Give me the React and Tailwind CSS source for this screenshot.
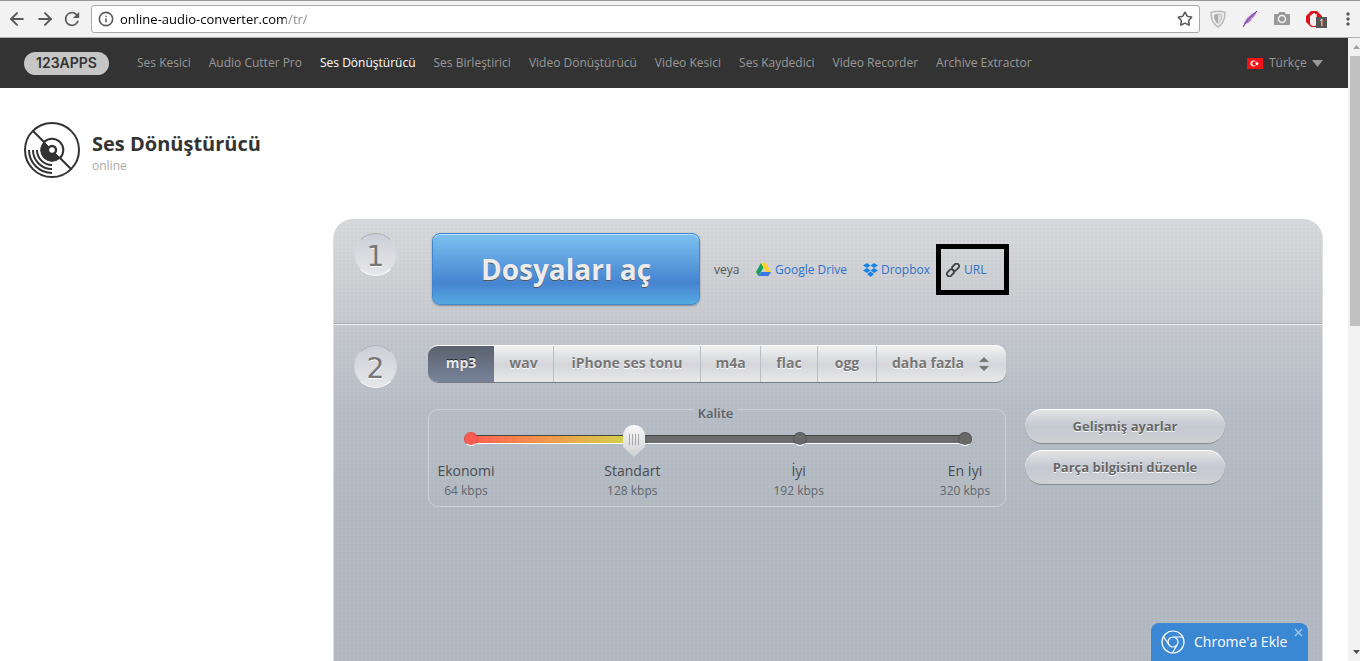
import React, { useState } from "react";
import { ArrowLeft, ArrowRight, Info, Star } from "lucide-react";

const navLinks = [
    "Ses Kesici",
    "Audio Cutter Pro",
    "Ses Dönüştürücü",
    "Ses Birleştirici",
    "Video Dönüştürücü",
    "Video Kesici",
    "Ses Kaydedici",
    "Video Recorder",
    "Archive Extractor",
];

const formats = [
    { name: "mp3", width: "w-[66px]" },
    { name: "wav", width: "w-[60px]" },
    { name: "iPhone ses tonu", width: "w-[147px]" },
    { name: "m4a", width: "w-[60px]" },
    { name: "flac", width: "w-[57px]" },
    { name: "ogg", width: "w-[59px]" },
];

const qualities = [
    { name: "Ekonomi", rate: "64 kbps" },
    { name: "Standart", rate: "128 kbps" },
    { name: "İyi", rate: "192 kbps" },
    { name: "En İyi", rate: "320 kbps" },
];

const BrowserBar = () => (
    <div className="flex h-[38px] shrink-0 items-center border-t border-b border-t-[#999] border-b-[#b0b0b0] bg-[#f2f2f2] pr-[10px] pl-[7px] text-[#5a5a5a]">
        <button aria-label="Back" className="w-7"><ArrowLeft size={20} strokeWidth={2.4} /></button>
        <button aria-label="Forward" className="w-7"><ArrowRight size={20} strokeWidth={2.4} /></button>
        <button aria-label="Reload" className="w-7">
            <svg width="18" height="18" viewBox="0 0 24 24" fill="currentColor">
                <path d="M17.65 6.35A7.96 7.96 0 0 0 12 4a8 8 0 1 0 7.73 10h-2.08A6 6 0 1 1 12 6c1.66 0 3.14.69 4.22 1.78L13 11h7V4z" transform="translate(-2.4 -2.4) scale(1.2)" />
            </svg>
        </button>
        <div className="flex h-7 flex-1 items-center rounded-[3px] border border-[#a9a9a9] bg-white px-[6px]">
            <Info size={16} strokeWidth={2.4} />
            <input
                aria-label="Address"
                defaultValue="online-audio-converter.com/tr/"
                className="ml-[6px] h-6 flex-1 bg-[linear-gradient(to_right,#000_166px,#888_166px)] bg-clip-text text-[13px] text-transparent outline-none"
            />
            <Star size={16} strokeWidth={2.4} />
        </div>
        <div className="flex items-center gap-4 pl-[10px]">
            <svg width="16" height="18" viewBox="0 0 16 18">
                <path d="M1 2.500Q8 0 15 2.500Q15 13 8 17Q1 13 1 2.500Z" fill="#eee" stroke="#bbb" strokeWidth="1.500" />
                <path d="M4 5Q6 4 8 4V14Q4 11 4 5Z" fill="#aaa" />
                <path d="M8 4Q10 4 12 5Q12 11 8 14" fill="#ddd" stroke="#bbb" />
            </svg>
            <svg width="16" height="18" viewBox="0 0 16 18">
                <path d="M1 17Q2 7 15 1Q14 5 11 8L9 9L10 10Q7 13 3 14Z" fill="#b184d2" />
                <path d="M1 17Q5 9 15 1" fill="none" stroke="#69309a" />
            </svg>
            <svg width="16" height="14" viewBox="0 0 16 14">
                <path d="M1 2h3l1.500-2h5L12 2h3q1 0 1 1v9q0 1-1 1H1q-1 0-1-1V3q0-1 1-1z" fill="#999" />
                <circle cx="8" cy="7" r="3.500" fill="none" stroke="#f2f2f2" strokeWidth="1.500" />
            </svg>
            <div className="relative">
                <svg width="16" height="16" viewBox="0 0 16 16">
                    <path d="M5 0h6l5 5v6l-5 5H5l-5-5V5z" fill="#d8141c" />
                    <path d="M4 9V4.500h1.600V3h1.700V2h1.700V3h1.700V10l1.200-1.500 1.300.6-2 4q-1 1.900-3 1.900H7q-3 0-3-4z" fill="#f6eded" />
                </svg>
                <span className="absolute top-[6px] left-[10px] h-[11px] w-[11px] bg-[#555] text-center text-[9px] leading-[11px] text-white">1</span>
            </div>
            <svg className="ml-2" width="4" height="16" viewBox="0 0 4 16" fill="#5a5a5a">
                <circle cx="2" cy="3" r="1.700" /><circle cx="2" cy="8" r="1.700" /><circle cx="2" cy="13" r="1.700" />
            </svg>
        </div>
    </div>
);

const Header = () => (
    <header className="flex h-[50px] items-center bg-[#333] pr-[25px] pl-6 text-xs text-[#999]">
        <a href="#" className="mr-7 flex h-[23px] w-[85px] items-center justify-center rounded-full bg-[#c6c6c6] font-['Inter'] text-sm font-semibold text-[#333]">
            123APPS
        </a>
        <nav className="flex gap-[18px]">
            {navLinks.map((item) => (
                <a key={item} href="#" className={item === "Ses Dönüştürücü" ? "text-white" : ""}>
                    {item}
                </a>
            ))}
        </nav>
        <div className="ml-auto flex items-center">
            <svg className="mr-[6px]" width="16" height="11" viewBox="0 0 16 11">
                <rect width="16" height="11" fill="#f01414" />
                <circle cx="6.500" cy="5.500" r="3" fill="#fff" />
                <circle cx="7.500" cy="5.500" r="2.300" fill="#f01414" />
                <path d="M10 3.500l.6 1.300 1.400.2-1 1 .2 1.500-1.200-.7-1.200.7.200-1.500-1-1 1.400-.2z" fill="#fff" />
            </svg>
            <select aria-label="Dil" className="w-[43px] appearance-none">
                <option>Türkçe</option>
            </select>
            <svg width="11" height="7" viewBox="0 0 11 7"><path d="M0 0h11L5.500 7z" fill="#999" /></svg>
        </div>
    </header>
);

const DiscLogo = () => (
    <svg width="56" height="56" viewBox="0 0 56 56" fill="none" stroke="#333" strokeWidth="2">
        <circle cx="28" cy="28" r="27" />
        <path d="M9 9L21 21M35 35L47 47" />
        <path d="M20 20A11.300 11.300 0 1 1 36 36" />
        <path d="M20 20A11.300 11.300 0 0 0 36 36L28 28Z" fill="#333" stroke="#333" strokeWidth="1" />
        <circle cx="28" cy="28" r="4" fill="#fff" strokeWidth="2.400" />
        <path d="M5 28A23 23 0 0 0 28 51M9 28A19 19 0 0 0 28 47M13 28A15 15 0 0 0 28 43" />
    </svg>
);

const Step = ({ number }) => (
    <div className="flex size-[43px] shrink-0 items-center justify-center rounded-full border border-t-[#aeb1b8] border-r-[#d4d5d9] border-b-white border-l-[#d4d5d9] bg-linear-to-b from-[#cccfd7] to-[#e6e7e9] pt-1 font-['DejaVu_Sans'] text-[28px] leading-none text-[#777] [text-shadow:0_1px_0_#fff]">
        {number}
    </div>
);

const Sources = () => (
    <div className="flex h-[51px] items-center text-xs text-[#2f72cf]">
        <span className="w-[42px] text-[#555]">veya</span>
        <a href="#" className="flex w-[107px] items-center gap-1">
            <svg width="15" height="13" viewBox="0 0 15 13">
                <path d="M5 0L0 9L2.500 13L7.500 4.500Z" fill="#11a05b" />
                <path d="M5 0H10L15 9H10Z" fill="#ffcf2e" />
                <path d="M5 9H15L12.500 13H2.500Z" fill="#3b77e8" />
            </svg>
            Google Drive
        </a>
        <a href="#" className="flex w-[73px] items-center gap-[3px]">
            <svg width="15" height="14" viewBox="0 0 15 14" fill="#1684e8">
                <path d="M4 0l3.500 2.500L4 5L0 2.500zM11 0l4 2.500L11 5L7.500 2.500zM0 7.500L4 5l3.500 2.500L4 10zM11 5l4 2.500L11 10L7.500 7.500zM4 11l3.500-2.500L11 11l-3.500 3z" />
            </svg>
            Dropbox
        </a>
        <a href="#" className="flex h-[51px] w-[73px] items-center gap-1 border-5 border-black pl-[5px]">
            <svg width="14" height="14" viewBox="0 0 14 14" fill="none" stroke="#444" strokeWidth="1.800">
                <rect x="5.500" y="1.700" width="8" height="5" rx="2.500" transform="rotate(-45 9.500 4.200)" />
                <rect x="0.500" y="7.300" width="8" height="5" rx="2.500" transform="rotate(-45 4.500 9.800)" />
            </svg>
            URL
        </a>
    </div>
);

const Formats = () => {
    const [active, setActive] = useState("mp3");

    return (
        <div className="flex h-[38px] w-[578px] overflow-hidden rounded-[10px] border-t border-b border-t-white border-b-[#777b82] bg-linear-to-b from-[#f1f1f2] via-[#d5d6db] to-[#e8e8ea] text-sm font-bold text-[#777]">
            {formats.map((item) => (
                <button
                    key={item.name}
                    onClick={() => setActive(item.name)}
                    className={`${item.width} pb-[2px] ${
                        active === item.name
                            ? "bg-linear-to-b from-[#5b626e] to-[#78839a] text-[#e8e8ea] [text-shadow:0_-1px_0_#222]"
                            : "border-r border-[#bbbdc2] [text-shadow:0_1px_0_#fff]"
                    }`}
                >
                    {item.name}
                </button>
            ))}
            <label className="flex flex-1 items-center pl-[15px]">
                <select aria-label="Format" className="w-[87px] appearance-none pb-[2px] [text-shadow:0_1px_0_#fff]">
                    <option>daha fazla</option>
                </select>
                <svg width="10" height="14" viewBox="0 0 10 14" fill="#777">
                    <path d="M5 0L10 5H0zM0 9h10L5 14z" />
                </svg>
            </label>
        </div>
    );
};

const Quality = () => {
    const [value, setValue] = useState(33);

    return (
        <fieldset className="mt-[14px] w-[578px] rounded-[10px] border border-[#ced2d8] pr-3 pb-[5px] pl-[9px]">
            <legend className="mx-auto px-1 pt-2 text-[13px] leading-4 font-semibold text-[#5c6066]">Kalite</legend>
            <div className="mr-[21px] ml-[26px] grid h-9 items-center">
                <div className="col-start-1 row-start-1 mx-[5px] h-[9px] border-t border-b border-t-[#444] border-b-white bg-[#6b6b6b]">
                    <div
                        className="h-full bg-linear-to-r from-[#fd5b50] via-[#ef9a4c] to-[#cdd54a]"
                        style={{ width: `${value}%` }}
                    />
                </div>
                <div className="col-start-1 row-start-1 flex justify-between">
                    {qualities.map((item, index) => (
                        <span
                            key={item.name}
                            className={`size-[14px] rounded-full border border-b-white ${
                                index === 0 ? "border-[#d8504a] bg-[#fc5b54]" : "border-[#555] bg-[#696969]"
                            }`}
                        />
                    ))}
                </div>
                <input
                    type="range"
                    aria-label="Kalite"
                    min="0"
                    max="100"
                    value={value}
                    onChange={(e) => setValue(Number(e.target.value))}
                    className="relative col-start-1 row-start-1 -mx-1 mt-1 h-8 appearance-none bg-transparent [&::-webkit-slider-thumb]:h-8 [&::-webkit-slider-thumb]:w-[22px] [&::-webkit-slider-thumb]:appearance-none [&::-webkit-slider-thumb]:bg-[linear-gradient(#a8a8a8,#a8a8a8),linear-gradient(#a8a8a8,#a8a8a8),linear-gradient(#a8a8a8,#a8a8a8),linear-gradient(#a8a8a8,#a8a8a8),linear-gradient(#fafafa,#cfd0d3)] [&::-webkit-slider-thumb]:bg-[length:1px_11px,1px_11px,1px_11px,1px_11px,22px_32px] [&::-webkit-slider-thumb]:bg-[position:6px_9px,9px_9px,12px_9px,15px_9px,0_0] [&::-webkit-slider-thumb]:bg-no-repeat [&::-webkit-slider-thumb]:[clip-path:path('M0_11A11_11_0_0_1_22_11V22L11_32L0_22Z')]"
                />
            </div>
            <div className="mt-1 flex justify-between">
                {qualities.map((item) => (
                    <div key={item.name} className="flex w-14 flex-col items-center whitespace-nowrap">
                        <span className="text-sm leading-5 text-[#484c50]">{item.name}</span>
                        <span className="text-xs leading-5 text-[#62666c]">{item.rate}</span>
                    </div>
                ))}
            </div>
        </fieldset>
    );
};

const PillButton = ({ children }) => (
    <button className="h-[35px] w-[200px] rounded-full border-t border-b border-t-white border-b-[#858a90] bg-linear-to-b from-[#e2e3e4] via-[#c4c8d0] to-[#cfd2d3] text-[13px] font-bold text-[#666] [text-shadow:0_1px_0_#fff]">
        {children}
    </button>
);

const Converter = () => (
    <main className="mt-[41px] mr-[25px] ml-[333px] flex-1 rounded-t-[20px] border-x border-[#dcdee0] bg-[radial-gradient(#7d879012_1px,transparent_1px),linear-gradient(#d8d9db,#c6c9ce_105px,#b7bdc7_190px,#b3bac1_300px,#b3b9c2)] bg-[length:4px_4px,100%_100%]">
        <section className="flex h-[106px] border-b border-[#f0f1f2] px-5 pt-[14px] shadow-[inset_0_-1px_0_#a9acb1]">
            <Step number="1" />
            <button className="mr-[14px] ml-[35px] h-[72px] w-[268px] rounded-lg border border-[#3f87cf] bg-linear-to-b from-[#78bdee] from-5% via-[#4684d0] via-70% to-[#55a9e2] text-[28px] font-bold text-[#ececec] shadow-[inset_0_1px_0_#c0e2fa,0_1px_2px_#8a8f96] [text-shadow:0_1px_0_#555]">
                Dosyaları aç
            </button>
            <div className="pt-[11px]">
                <Sources />
            </div>
        </section>
        <section className="flex px-5 pt-5">
            <Step number="2" />
            <div className="ml-[31px]">
                <Formats />
                <Quality />
            </div>
            <div className="mt-16 ml-[19px] flex flex-col gap-[6px]">
                <PillButton>Gelişmiş ayarlar</PillButton>
                <PillButton>Parça bilgisini düzenle</PillButton>
            </div>
        </section>
    </main>
);

const ChromeBanner = () => (
    <div className="absolute right-10 bottom-0 flex h-[38px] w-[157px] items-center rounded-t-lg bg-[#3a87d3] pl-[10px] text-white">
        <svg width="24" height="24" viewBox="0 0 24 24" fill="none" stroke="#fff" strokeWidth="1.200">
            <circle cx="12" cy="12" r="11" />
            <circle cx="12" cy="12" r="5" />
            <path d="M12 7H22M7.700 14.500L2.500 6.500M16.300 14.500L11.500 23" />
        </svg>
        <a href="#" className="ml-[9px] text-sm">Chrome'a Ekle</a>
        <button aria-label="Kapat" className="absolute top-[5px] right-[5px]">
            <svg width="9" height="9" viewBox="0 0 9 9" stroke="#a9cbee" strokeWidth="1.200"><path d="M1 1l7 7M8 1L1 8" /></svg>
        </button>
    </div>
);

const Scrollbar = () => (
    <div className="flex w-3 shrink-0 flex-col items-end bg-[#f1f1f1]">
        <svg className="my-[7px]" width="7" height="4" viewBox="0 0 7 4" fill="#a3a3a3"><path d="M0 4L3.500 0L7 4z" /></svg>
        <div className="h-[270px] w-[10px] bg-[#c1c1c1]" />
        <svg className="mt-auto mb-[7px]" width="7" height="4" viewBox="0 0 7 4" fill="#505050"><path d="M0 0h7L3.500 4z" /></svg>
    </div>
);

const App = () => {
    return (
        <div className="flex min-h-screen flex-col bg-white font-['Open_Sans','Noto_Sans',sans-serif]">
            <BrowserBar />
            <div className="flex flex-1">
                <div className="relative flex flex-1 flex-col">
                    <Header />
                    <div className="mt-[34px] flex gap-3 pl-6">
                        <DiscLogo />
                        <div className="pt-2">
                            <h1 className="text-xl leading-7 font-bold text-[#333]">Ses Dönüştürücü</h1>
                            <p className="text-xs leading-4 text-[#aaa]">online</p>
                        </div>
                    </div>
                    <Converter />
                    <ChromeBanner />
                </div>
                <Scrollbar />
            </div>
        </div>
    );
};

export default App;
